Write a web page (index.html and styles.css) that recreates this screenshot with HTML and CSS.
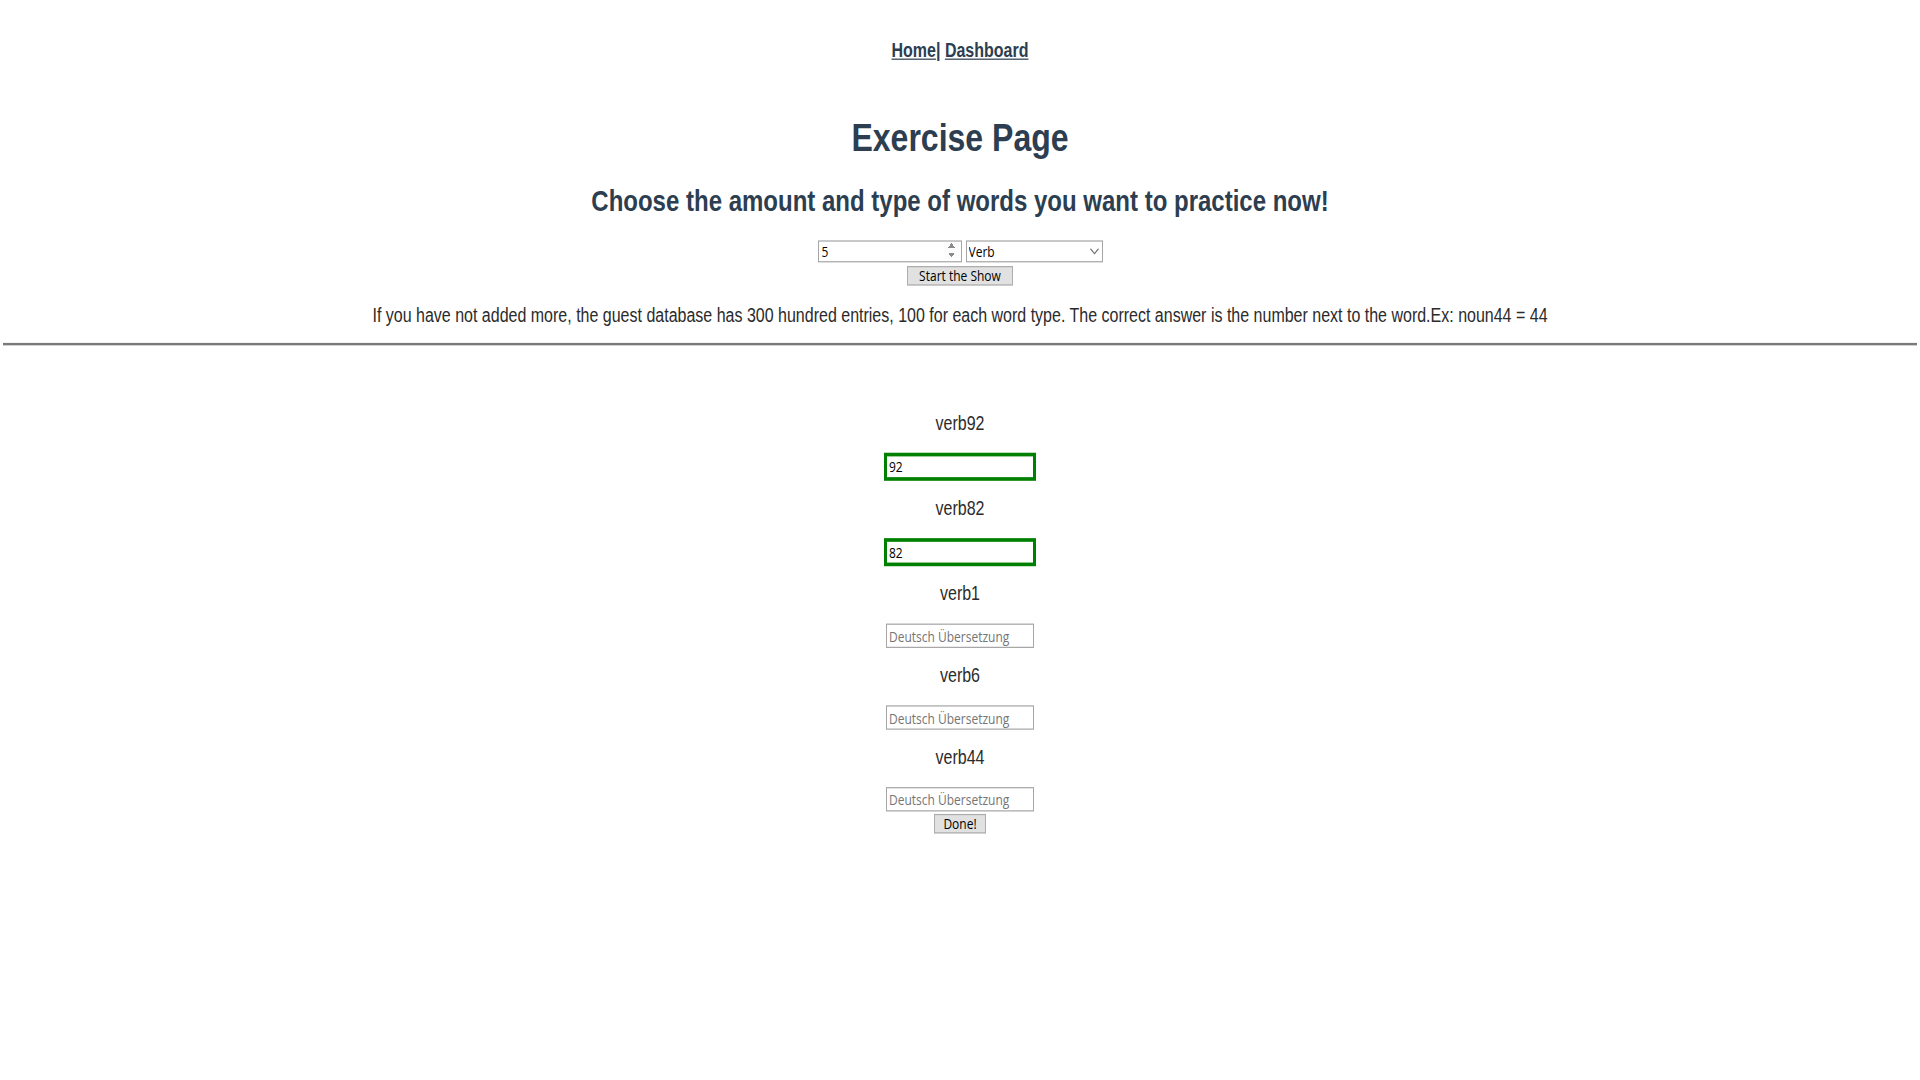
FILE: index.html
```html
<!DOCTYPE html>
<html lang="en">
<head>
<meta charset="utf-8">
<title>Exercise Page</title>
<link rel="stylesheet" href="styles.css">
</head>
<body>
<div class="page">
  <nav class="nav"><a href="#">Home</a>| <a href="#">Dashboard</a></nav>
  <h1 class="title">Exercise Page</h1>
  <h2 class="subtitle">Choose the amount and type of words you want to practice now!</h2>
  <form class="setup">
    <div class="controls">
      <input class="num" type="number" value="5" min="1">
      <span class="select-wrap">
        <select class="type">
          <option>Verb</option>
          <option>Noun</option>
          <option>Adjective</option>
        </select>
        <svg class="chev" width="9" height="6" viewBox="0 0 9 6"><path d="M0.5 0.8 L4.5 4.8 L8.5 0.8" fill="none" stroke="#6b6b6b" stroke-width="1"/></svg>
      </span>
    </div>
    <button class="btn start" type="button">Start the Show</button>
  </form>
  <p class="info">If you have not added more, the guest database has 300 hundred entries, 100 for each word type. The correct answer is the number next to the word.Ex: noun44 = 44</p>
  <hr class="rule">
  <form class="quiz">
    <div class="word"><div class="label">verb92</div><input class="answer ok" type="text" value="92"></div>
    <div class="word"><div class="label">verb82</div><input class="answer ok" type="text" value="82"></div>
    <div class="word"><div class="label">verb1</div><input class="answer" type="text" placeholder="Deutsch Übersetzung"></div>
    <div class="word"><div class="label">verb6</div><input class="answer" type="text" placeholder="Deutsch Übersetzung"></div>
    <div class="word last"><div class="label">verb44</div><input class="answer" type="text" placeholder="Deutsch Übersetzung"></div>
    <button class="btn done" type="button">Done!</button>
  </form>
</div>
</body>
</html>
```
FILE: styles.css
```css
html, body {
  margin: 0;
  padding: 0;
  background: #ffffff;
}

body {
  min-height: 1080px;
  font-family: "Liberation Sans", Arial, sans-serif;
  color: #2b2b2b;
}

.page {
  transform: scaleY(1.2203);
  transform-origin: top center;
  padding-top: 33px;
  text-align: center;
}

.nav {
  font-size: 16px;
  line-height: 18px;
  font-weight: bold;
  color: #2c3e50;
}

.nav a {
  color: #2c3e50;
  text-decoration: underline;
}

.title {
  margin: 44px 0 0;
  font-size: 32px;
  line-height: 37px;
  font-weight: bold;
  color: #2c3e50;
}

.subtitle {
  margin: 19px 0 0;
  font-size: 24px;
  line-height: 28px;
  font-weight: bold;
  color: #2c3e50;
}

.setup {
  margin-top: 18px;
  display: flex;
  flex-direction: column;
  align-items: center;
  gap: 2px;
}

.controls {
  display: flex;
  justify-content: center;
  gap: 4px;
}

.num,
.type {
  box-sizing: border-box;
  height: 18px;
  margin: 0;
  font-family: "Open Sans", "Noto Sans", sans-serif;
  font-size: 12px;
  color: #000;
  background: #fff;
  border: 1px solid #a6a6a6;
  border-radius: 0;
  outline: none;
}

.num {
  width: 144px;
  padding: 0 2px 0 3px;
}

.num::-webkit-inner-spin-button {
  opacity: 1;
  height: 14px;
}

.select-wrap {
  position: relative;
  display: block;
}

.type {
  width: 137px;
  padding: 0 2px;
  appearance: none;
  -webkit-appearance: none;
}

.chev {
  position: absolute;
  right: 4px;
  top: 6px;
  pointer-events: none;
}

.btn {
  box-sizing: border-box;
  margin: 0;
  font-family: "Open Sans", "Noto Sans", sans-serif;
  font-size: 12px;
  line-height: 14px;
  color: #000;
  background: #e1e1e1;
  border: 1px solid #adadad;
  border-radius: 0;
  padding: 0;
  cursor: pointer;
}

.start {
  width: 106px;
  height: 16px;
  margin-top: 1px;
}

.info {
  margin: 16px 0 0;
  font-size: 16px;
  line-height: 18px;
  color: #2b2b2b;
}

.rule {
  margin: 13px 3px 0;
  height: 0;
  border: 0;
  border-top: 2px solid #7a7a7a;
}

.quiz {
  margin-top: 55px;
  display: flex;
  flex-direction: column;
  align-items: center;
}

.word {
  display: flex;
  flex-direction: column;
  align-items: center;
  padding-bottom: 14px;
}

.word.last {
  padding-bottom: 2px;
}

.label {
  font-size: 16px;
  line-height: 18px;
  color: #2b2b2b;
}

.answer {
  box-sizing: content-box;
  margin-top: 15px;
  width: 142px;
  height: 18px;
  padding: 0 2px;
  font-family: "Open Sans", "Noto Sans", sans-serif;
  font-size: 12px;
  color: #000;
  background: #fff;
  border: 1px solid #a6a6a6;
  border-radius: 0;
  outline: none;
}

.answer::placeholder {
  color: #757575;
}

.answer.ok {
  border: 3px solid #008000;
  height: 17px;
}

.done {
  width: 52px;
  height: 16px;
}
```
